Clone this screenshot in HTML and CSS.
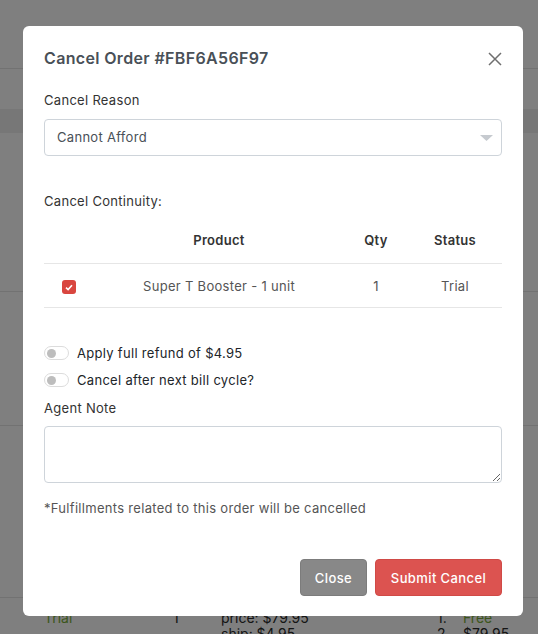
FILE: index.html
```html
<!DOCTYPE html>
<html lang="en">
<head>
<meta charset="utf-8">
<title>Cancel Order</title>
<link rel="stylesheet" href="styles.css">
</head>
<body>
<div class="page">
  <div class="pg-header"></div>
  <div class="pg-gap"></div>
  <div class="pg-band"></div>
  <div class="pg-block b1"></div>
  <div class="pg-block b2"></div>
  <div class="pg-block b3"></div>
  <div class="pg-rows">
    <span class="green">Trial</span><span>1</span><span>price: $79.95</span><span>1.</span><span class="green">Free</span>
    <span></span><span></span><span>ship: $4.95</span><span>2.</span><span>$79.95</span>
  </div>
</div>

<div class="overlay">
  <div class="modal">
    <div class="modal-head">
      <h2 class="modal-title">Cancel Order #FBF6A56F97</h2>
      <svg class="close-x" width="14" height="14" viewBox="0 0 14 14"><path d="M1 1 L13 13 M13 1 L1 13" stroke="#6f6f6f" stroke-width="1.5" fill="none"/></svg>
    </div>

    <div class="label l-reason">Cancel Reason</div>
    <div class="select">
      <span>Cannot Afford</span>
      <svg width="13" height="6" viewBox="0 0 13 6"><path d="M0 0 H13 L6.5 6 Z" fill="#c6cacf"/></svg>
    </div>

    <div class="label l-cont">Cancel Continuity:</div>
    <table class="tbl">
      <thead>
        <tr><th class="c-chk"></th><th class="c-prod">Product</th><th class="c-qty">Qty</th><th class="c-stat">Status</th></tr>
      </thead>
      <tbody>
        <tr>
          <td class="c-chk"><span class="chk"><svg width="8" height="7" viewBox="0 0 8 7"><path d="M1 3.6 L3.1 5.6 L7 1.2" stroke="#fff" stroke-width="1.6" fill="none"/></svg></span></td>
          <td>Super T Booster - 1 unit</td>
          <td>1</td>
          <td>Trial</td>
        </tr>
      </tbody>
    </table>

    <div class="toggles">
      <div class="toggle-row"><span class="switch"><span class="knob"></span></span><span>Apply full refund of $4.95</span></div>
      <div class="toggle-row"><span class="switch"><span class="knob"></span></span><span>Cancel after next bill cycle?</span></div>
    </div>

    <div class="label l-note">Agent Note</div>
    <textarea class="note"></textarea>

    <div class="footnote">*Fulfillments related to this order will be cancelled</div>

    <div class="actions">
      <button class="btn btn-close">Close</button>
      <button class="btn btn-submit">Submit Cancel</button>
    </div>
  </div>
</div>
</body>
</html>
```
FILE: styles.css
```css
* { box-sizing: border-box; }
html, body { margin: 0; padding: 0; }
body {
  width: 538px;
  height: 634px;
  overflow: hidden;
  font-family: Inter, "Noto Sans", sans-serif;
  font-size: 13px;
  letter-spacing: 0.3px;
  background: #fff;
}

/* background page */
.page { width: 538px; }
.pg-header { height: 69px; border-bottom: 1px solid #e4e4e4; }
.pg-gap { height: 40px; }
.pg-band { height: 24px; background: #efefef; }
.pg-block { border-bottom: 1px solid #e4e4e4; }
.b1 { height: 159px; }
.b2 { height: 134px; }
.b3 { height: 172px; }
.pg-rows {
  display: grid;
  grid-template-columns: 129px 48px 216px 26px auto;
  padding-left: 44px;
  padding-top: 12px;
  font-size: 14px;
  line-height: 16px;
  letter-spacing: 0;
  color: #2a2a2a;
}
.pg-rows .green { color: #7bad3a; }

/* overlay + modal */
.overlay {
  position: fixed;
  inset: 0;
  background: rgba(0, 0, 0, 0.5);
}
.modal {
  margin: 26px 0 0 23px;
  width: 500px;
  height: 590px;
  background: #fff;
  border-radius: 6px;
  padding: 20px 21px 20px 21px;
  display: flex;
  flex-direction: column;
  color: #333;
}
.modal-head {
  height: 24px;
  display: flex;
  align-items: center;
  justify-content: space-between;
}
.modal-title {
  margin: 0;
  font-size: 16px;
  font-weight: 600;
  color: #495057;
  line-height: 24px;
  letter-spacing: 0.35px;
}
.close-x { margin-top: 2px; }

.label { line-height: 20px; color: #333; }
.l-reason { margin-top: 20px; }
.l-cont { margin-top: 35px; }
.l-note { margin-top: 8px; }

.select {
  margin-top: 9px;
  height: 37px;
  border: 1px solid #ced4da;
  border-radius: 4px;
  display: flex;
  align-items: center;
  justify-content: space-between;
  padding: 0 8px 0 12px;
  color: #495057;
}
.select svg { margin-top: 1px; }

.tbl {
  margin-top: 6px;
  width: 458px;
  border-collapse: collapse;
  table-layout: fixed;
}
.tbl th, .tbl td { text-align: center; padding: 0; }
.tbl th {
  height: 47px;
  font-weight: 600;
  color: #333;
  border-bottom: 1px solid #e6e6e6;
}
.tbl td {
  height: 44px;
  color: #555;
  border-bottom: 1px solid #e6e6e6;
}
.c-chk { width: 50px; }
.c-prod { width: 250px; }
.c-qty { width: 64px; }
.c-stat { width: 94px; }
.tbl td.c-chk { text-align: left; padding-left: 18px; }
.chk {
  width: 14px;
  height: 14px;
  border-radius: 3px;
  background: #d9463f;
  display: inline-flex;
  align-items: center;
  justify-content: center;
  vertical-align: middle;
}

.toggles {
  margin-top: 35px;
  display: flex;
  flex-direction: column;
  gap: 7px;
}
.toggle-row {
  height: 20px;
  display: flex;
  align-items: center;
  gap: 8px;
  color: #212529;
}
.switch {
  width: 25px;
  height: 14px;
  border: 1px solid #dcdcdc;
  border-radius: 7px;
  display: flex;
  align-items: center;
  padding-left: 2px;
}
.knob {
  width: 9px;
  height: 9px;
  border-radius: 50%;
  background: #bdbdbd;
}

.note {
  margin-top: 8px;
  width: 458px;
  height: 57px;
  border: 1px solid #ced4da;
  border-radius: 4px;
  resize: vertical;
  font: inherit;
  display: block;
}

.footnote { margin-top: 15px; line-height: 20px; color: #555; }

.actions {
  margin-top: 41px;
  display: flex;
  justify-content: flex-end;
  gap: 8px;
}
.btn {
  height: 37px;
  border-radius: 4px;
  font-family: inherit;
  font-size: 13px;
  font-weight: 500;
  letter-spacing: 0.4px;
  color: #fff;
  padding: 0;
}
.btn-close { background: #888; border: 1px solid #7c7c7c; width: 67px; }
.btn-submit { background: #dc5350; border: 1px solid #d04a46; width: 127px; }
```
